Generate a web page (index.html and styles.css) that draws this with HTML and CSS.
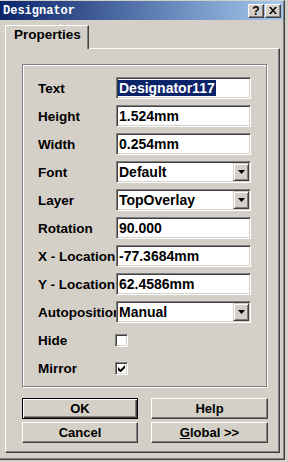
FILE: index.html
```html
<!DOCTYPE html>
<html lang="en">
<head>
  <meta charset="UTF-8">
  <title>Designator</title>
  <link rel="stylesheet" href="styles.css">
</head>
<body>

<div class="window">
  <div class="titlebar">
    <span class="title">Designator</span>
    <div class="tb-button">?</div>
    <div class="tb-button">
      <svg width="8" height="7" viewBox="0 0 8 7"><path d="M0 0h2l2 2.5L6 0h2L5 3.5 8 7H6L4 4.5 2 7H0l3-3.5z" fill="#000"/></svg>
    </div>
  </div>

  <div class="content">
    <div class="tab">Properties</div>
    <div class="panel">
      <div class="group">
        <div class="row">
          <span class="label">Text</span>
          <div class="field"><span class="selected">Designator117</span></div>
        </div>
        <div class="row">
          <span class="label">Height</span>
          <div class="field">1.524mm</div>
        </div>
        <div class="row">
          <span class="label">Width</span>
          <div class="field">0.254mm</div>
        </div>
        <div class="row">
          <span class="label">Font</span>
          <div class="field">Default<span class="drop"><svg width="7" height="4" viewBox="0 0 7 4"><path d="M0 0h7L3.5 4z" fill="#000"/></svg></span></div>
        </div>
        <div class="row">
          <span class="label">Layer</span>
          <div class="field">TopOverlay<span class="drop"><svg width="7" height="4" viewBox="0 0 7 4"><path d="M0 0h7L3.5 4z" fill="#000"/></svg></span></div>
        </div>
        <div class="row">
          <span class="label">Rotation</span>
          <div class="field">90.000</div>
        </div>
        <div class="row">
          <span class="label">X - Location</span>
          <div class="field">-77.3684mm</div>
        </div>
        <div class="row">
          <span class="label">Y - Location</span>
          <div class="field">62.4586mm</div>
        </div>
        <div class="row">
          <span class="label">Autoposition</span>
          <div class="field">Manual<span class="drop"><svg width="7" height="4" viewBox="0 0 7 4"><path d="M0 0h7L3.5 4z" fill="#000"/></svg></span></div>
        </div>
        <div class="row">
          <span class="label">Hide</span>
          <div class="check"></div>
        </div>
        <div class="row">
          <span class="label">Mirror</span>
          <div class="check"><svg width="7" height="7" viewBox="0 0 7 7"><path d="M0 2v3l2 2h1l4-4V0L2.5 4.5z" fill="#000"/></svg></div>
        </div>
      </div>

      <div class="buttons">
        <button class="btn default">OK</button>
        <button class="btn">Help</button>
        <button class="btn">Cancel</button>
        <button class="btn"><u>G</u>lobal &gt;&gt;</button>
      </div>
    </div>
  </div>
</div>

</body>
</html>
```

FILE: styles.css
```css
* {
  box-sizing: border-box;
}

body {
  margin: 0;
  width: 288px;
  height: 462px;
  overflow: hidden;
  background-color: #d4d0c8;
  font-family: "Liberation Sans", Arial, sans-serif;
  color: #000;
}

.window {
  width: 285px;
  height: 460px;
  border-top: 1px solid #d4d0c8;
  border-right: 1px solid #404040;
  border-bottom: 1px solid #404040;
  box-shadow: inset -1px -1px #808080;
  display: flex;
  flex-direction: column;
}

.titlebar {
  height: 19px;
  margin-right: 1px;
  padding: 0 2px 0 3px;
  background: linear-gradient(to right, #0a246a, #a6caf0);
  display: flex;
  align-items: center;
  gap: 1px;
}

.title {
  flex: 1;
  color: #fff;
  font: bold 12px "Liberation Mono", monospace;
}

.tb-button {
  width: 16px;
  height: 14px;
  background-color: #d4d0c8;
  border: 1px solid;
  border-color: #fff #404040 #404040 #fff;
  box-shadow: inset -1px -1px #808080;
  font-weight: bold;
  font-size: 12px;
  line-height: 12px;
  display: flex;
  align-items: center;
  justify-content: center;
}

.content {
  padding: 5px 0 0 5px;
}

.tab {
  position: relative;
  z-index: 1;
  width: 84px;
  height: 24px;
  margin-bottom: -1px;
  padding: 1px 0 0 8px;
  background-color: #d4d0c8;
  border-left: 1px solid #fff;
  border-top: 1px solid #fff;
  border-right: 1px solid #404040;
  border-top-left-radius: 2px;
  box-shadow: inset -1px 0 #808080;
  font-weight: bold;
  font-size: 13.5px;
  line-height: 16px;
}

.panel {
  width: 275px;
  height: 405px;
  padding: 15px 0 0 16px;
  border-left: 1px solid #fff;
  border-top: 1px solid #fff;
  border-right: 1px solid #404040;
  border-bottom: 1px solid #404040;
  box-shadow: inset -1px -1px #808080;
}

.group {
  width: 245px;
  padding: 12px 15px 7px;
  border: 1px solid #808080;
  box-shadow: inset 1px 1px #fff, 1px 1px #fff;
  display: flex;
  flex-direction: column;
  gap: 6px;
}

.row {
  height: 22px;
  display: flex;
  align-items: center;
}

.label {
  width: 78px;
  flex: none;
  overflow: hidden;
  white-space: nowrap;
  font-weight: bold;
  font-size: 13.5px;
}

.field {
  width: 135px;
  height: 22px;
  padding-left: 2px;
  background-color: #fff;
  border: 1px solid;
  border-color: #808080 #fff #fff #808080;
  box-shadow: inset 1px 1px #404040, inset -1px -1px #d4d0c8;
  display: flex;
  align-items: center;
  font-weight: bold;
  font-size: 14px;
  white-space: nowrap;
}

.selected {
  margin-left: -1px;
  padding: 0 1px;
  background-color: #0a246a;
  color: #fff;
}

.drop {
  width: 16px;
  height: 18px;
  margin-left: auto;
  margin-right: 1px;
  background-color: #d4d0c8;
  border: 1px solid;
  border-color: #d4d0c8 #404040 #404040 #d4d0c8;
  box-shadow: inset 1px 1px #fff, inset -1px -1px #808080;
  display: flex;
  align-items: center;
  justify-content: center;
}

.check {
  width: 13px;
  height: 13px;
  margin-left: -1px;
  background-color: #fff;
  border: 1px solid;
  border-color: #808080 #fff #fff #808080;
  box-shadow: inset 1px 1px #404040, inset -1px -1px #d4d0c8;
  display: flex;
  align-items: center;
  justify-content: center;
}

.buttons {
  width: 246px;
  margin-top: 11px;
  display: grid;
  grid-template-columns: 116px 117px;
  column-gap: 13px;
  row-gap: 3px;
}

.btn {
  height: 21px;
  padding: 0;
  background-color: #d4d0c8;
  border: 1px solid;
  border-color: #fff #404040 #404040 #fff;
  box-shadow: inset -1px -1px #808080;
  font-family: "Liberation Sans", Arial, sans-serif;
  font-weight: bold;
  font-size: 13px;
  color: #000;
}

.btn.default {
  border: 1px solid #000;
  box-shadow: inset 1px 1px #fff, inset -1px -1px #404040, inset -2px -2px #808080;
}
```
